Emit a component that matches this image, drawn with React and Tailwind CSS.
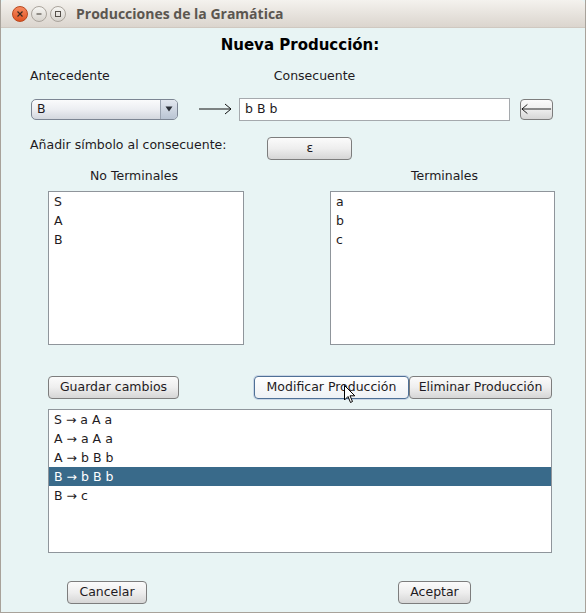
import React from 'react';

const font = { fontFamily: '"DejaVu Sans", "Liberation Sans", sans-serif' };

function Btn({ children, className = '', focused = false }) {
  return (
    <div
      className={
        'flex items-center justify-center rounded-[4px] border text-[12.5px] text-[#1e1a22] ' +
        (focused
          ? 'border-[#4f7096] bg-gradient-to-b from-[#ffffff] to-[#eef1f5] shadow-[0_0_0_1px_#c9d6e6] '
          : 'border-[#7d7d7d] bg-gradient-to-b from-[#fbfbfb] via-[#eeeeee] to-[#d6d6d6] ') +
        className
      }
    >
      {children}
    </div>
  );
}

function ListBox({ items, className = '', selected = -1 }) {
  return (
    <div className={'border border-[#8f959b] bg-white ' + className}>
      {items.map((it, i) => (
        <div
          key={i}
          className={
            'h-[19px] pl-[5px] pt-[2px] flex items-center text-[12.5px] ' +
            (i === selected ? 'bg-[#396a8a] text-white' : 'text-[#1e1a22]')
          }
        >
          {it}
        </div>
      ))}
    </div>
  );
}

function LongArrow({ left = false }) {
  return (
    <svg width="34" height="12" viewBox="0 0 34 12">
      {left ? (
        <>
          <line x1="1" y1="6" x2="33" y2="6" stroke="#111" strokeWidth="1" />
          <polyline points="7,1 1,6 7,11" fill="none" stroke="#111" strokeWidth="1" />
        </>
      ) : (
        <>
          <line x1="1" y1="6" x2="33" y2="6" stroke="#111" strokeWidth="1" />
          <polyline points="27,1 33,6 27,11" fill="none" stroke="#111" strokeWidth="1" />
        </>
      )}
    </svg>
  );
}

export default function App() {
  const prods = ['S → a A a', 'A → a A a', 'A → b B b', 'B → b B b', 'B → c'];
  return (
    <div className="w-[586px] h-[613px] bg-[#e8f4f4] flex flex-col border-l border-r border-b border-[#a8a29a]" style={font}>
      {/* title bar */}
      <div className="h-[28px] flex items-center rounded-t-[5px] bg-gradient-to-b from-[#f4f2ee] to-[#dbd5ce] border-b border-[#cfc8c0] pl-[11px] shrink-0">
        <div className="w-[16px] h-[16px] rounded-full bg-gradient-to-b from-[#f7895e] to-[#e0531f] border border-[#b9471d] flex items-center justify-center">
          <svg width="8" height="8" viewBox="0 0 8 8">
            <path d="M1.5 1.5 L6.5 6.5 M6.5 1.5 L1.5 6.5" stroke="#3b2a20" strokeWidth="1.2" />
          </svg>
        </div>
        <div className="ml-[3px] w-[16px] h-[16px] rounded-full bg-gradient-to-b from-[#f7f6f3] to-[#d7d3cd] border border-[#aaa49c] flex items-center justify-center">
          <svg width="8" height="8" viewBox="0 0 8 8">
            <path d="M1.5 4 L6.5 4" stroke="#55504a" strokeWidth="1.2" />
          </svg>
        </div>
        <div className="ml-[3px] w-[16px] h-[16px] rounded-full bg-gradient-to-b from-[#f7f6f3] to-[#d7d3cd] border border-[#aaa49c] flex items-center justify-center">
          <svg width="8" height="8" viewBox="0 0 8 8">
            <rect x="1.5" y="1.5" width="5" height="5" fill="none" stroke="#55504a" strokeWidth="1" />
          </svg>
        </div>
        <div className="ml-[10px] text-[14px] font-bold text-[#5b5650]" style={{ fontFamily: '"Open Sans", "DejaVu Sans", sans-serif' }}>
          Producciones de la Gramática
        </div>
      </div>

      {/* heading */}
      <div className="mt-[7px] h-[20px] flex items-center justify-center text-[15px] font-bold text-black pl-[14px]">
        Nueva Producción:
      </div>

      {/* labels */}
      <div className="mt-[13px] h-[16px] flex items-center text-[12.5px] text-[#1e1a22]">
        <span className="ml-[29px]">Antecedente</span>
        <span className="ml-[164px]">Consecuente</span>
      </div>

      {/* combo / field row */}
      <div className="mt-[14px] h-[22px] flex items-center">
        <div className="ml-[30px] w-[147px] h-[21px] rounded-[5px] border border-[#7c8593] bg-gradient-to-b from-[#fafbfc] via-[#eceef2] to-[#d3d7de] flex overflow-hidden">
          <span className="flex-1 pl-[5px] flex items-center text-[12.5px] text-[#1e1a22]">B</span>
          <div className="w-[17px] border-l border-[#9aa3b0] bg-gradient-to-b from-[#e3e8ef] to-[#b9c4d3] flex items-center justify-center">
            <svg width="8" height="6" viewBox="0 0 8 6">
              <path d="M0.5 0.5 L7.5 0.5 L4 5.5 Z" fill="#2b2f36" />
            </svg>
          </div>
        </div>
        <div className="ml-[20px]">
          <LongArrow />
        </div>
        <div className="ml-[7px] w-[271px] h-[23px] border border-[#a5a9ad] bg-white flex items-center pl-[5px] text-[12.5px] text-[#1e1a22]">
          b B b
        </div>
        <div className="ml-[10px] w-[33px] h-[21px] rounded-[4px] border border-[#7d7d7d] bg-gradient-to-b from-[#fbfbfb] via-[#eeeeee] to-[#d6d6d6] flex items-center justify-center">
          <LongArrow left />
        </div>
      </div>

      {/* añadir símbolo */}
      <div className="mt-[17px] h-[23px] flex items-center">
        <span className="ml-[29px] text-[12.5px] text-[#1e1a22] -mt-[7px]">Añadir símbolo al consecuente:</span>
        <Btn className="ml-[41px] w-[85px] h-[23px]">ε</Btn>
      </div>

      {/* list headers */}
      <div className="mt-[8px] h-[16px] flex items-center text-[12.5px] text-[#1e1a22]">
        <span className="ml-[89px]">No Terminales</span>
        <span className="ml-[233px]">Terminales</span>
      </div>

      {/* lists */}
      <div className="mt-[7px] flex">
        <ListBox items={['S', 'A', 'B']} className="ml-[47px] w-[196px] h-[154px]" />
        <ListBox items={['a', 'b', 'c']} className="ml-[86px] w-[225px] h-[154px]" />
      </div>

      {/* action buttons */}
      <div className="mt-[31px] h-[23px] flex items-center relative">
        <Btn className="ml-[47px] w-[131px] h-[23px]">Guardar cambios</Btn>
        <Btn focused className="ml-[75px] w-[155px] h-[23px]">Modificar Producción</Btn>
        <Btn className="w-[143px] h-[23px]">Eliminar Producción</Btn>
        <svg className="absolute left-[343px] top-[9px]" width="12" height="19" viewBox="0 0 12 19">
          <path d="M0.5 0.5 L0.5 15 L4 11.5 L6.5 17.5 L8.5 16.5 L6 10.8 L10.8 10.8 Z" fill="#fff" stroke="#000" strokeWidth="1" strokeLinejoin="round" />
        </svg>
      </div>

      {/* productions */}
      <div className="mt-[10px] flex">
        <ListBox items={prods} selected={3} className="ml-[47px] w-[504px] h-[144px]" />
      </div>

      {/* bottom buttons */}
      <div className="mt-[28px] h-[23px] flex items-center">
        <Btn className="ml-[66px] w-[80px] h-[23px]">Cancelar</Btn>
        <Btn className="ml-[251px] w-[73px] h-[23px]">Aceptar</Btn>
      </div>
    </div>
  );
}
